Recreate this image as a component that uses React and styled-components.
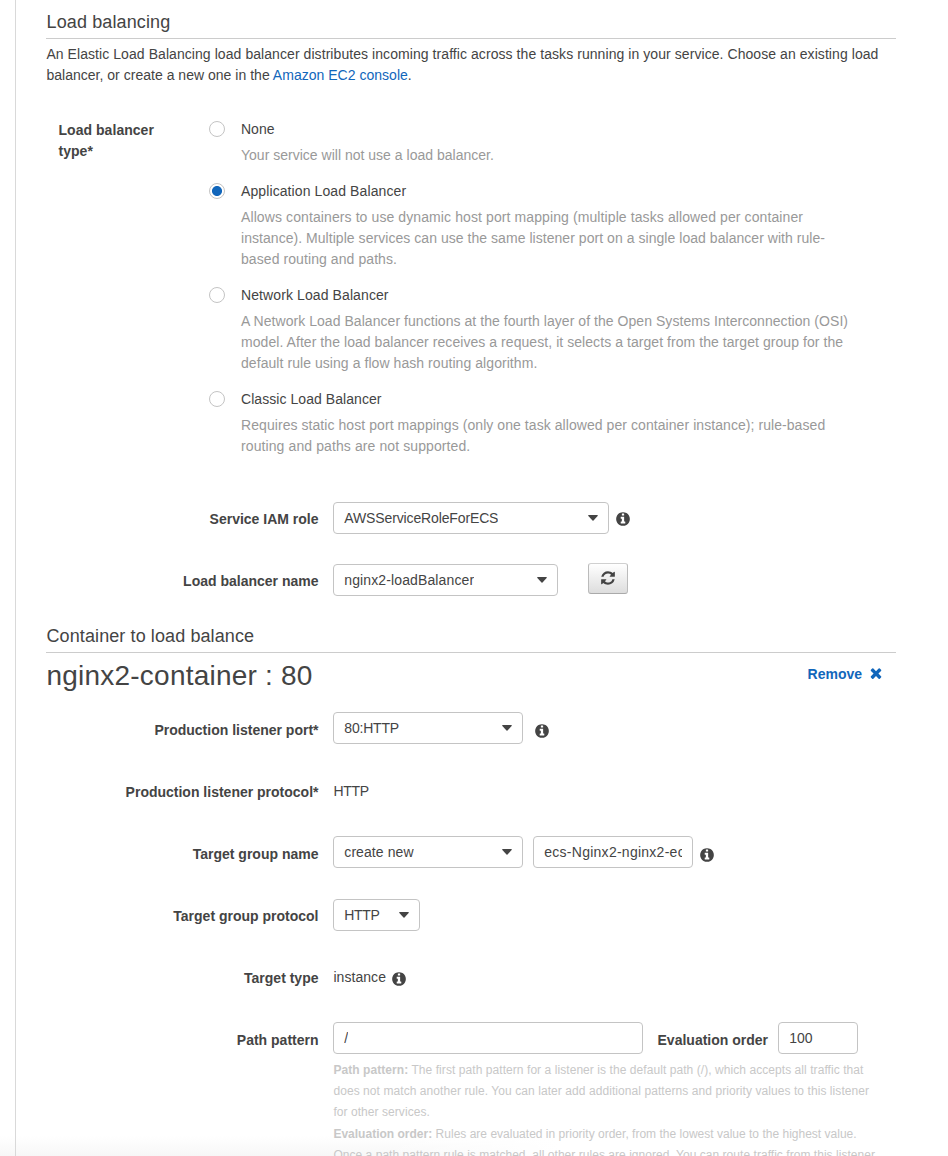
import React from "react";
import styled, { createGlobalStyle } from "styled-components";

const Global = createGlobalStyle`
  * { box-sizing: border-box; }
  html, body { margin: 0; padding: 0; background: #fff; overflow: hidden; }
  body {
    font-family: "Liberation Sans", Arial, sans-serif;
    font-size: 14px;
    line-height: 21px;
    color: #444;
  }
  h2, h3, p { margin: 0; font-weight: 400; }
`;

const Page = styled.div`
  height: 1156px;
  overflow: hidden;
  padding-left: 15px;
  background:
    linear-gradient(to right, rgba(255, 255, 255, 0) 380px, #fff 560px),
    linear-gradient(#fff 0, #fff 1136px, #f7f7f7 1156px);
`;
const Panel = styled.main`
  height: 1156px;
  border-left: 1px solid #d9d9d9;
  padding: 0 52px 0 30px;
`;
const SectionTitle = styled.h2`
  height: ${(p) => p.$height}px;
  display: flex;
  align-items: flex-end;
  padding: 0 0 5px 0.5px;
  border-bottom: 1px solid #ccc;
  font-size: 18px;
  line-height: 21px;
  letter-spacing: ${(p) => p.$ls || 0}px;
`;
const Line = styled.span`
  display: block;
  white-space: nowrap;
  letter-spacing: ${(p) => p.$ls || 0}px;
`;
const Intro = styled.p`
  padding: 5px 0 0 0.4px;
`;
const Link = styled.a`
  color: #1166bb;
`;
const TypeRow = styled.div`
  display: flex;
  margin-top: 33px;
  padding-left: 12px;
`;
const TypeLabel = styled.div`
  width: 151px;
  padding: 1px 0 0 0.5px;
  font-weight: 700;
  letter-spacing: 0.04px;
`;
const Options = styled.div`
  display: flex;
  flex-direction: column;
  gap: 15px;
`;
const Option = styled.label`
  display: grid;
  grid-template-columns: 16px auto;
  column-gap: 16px;
  row-gap: 5px;
`;
const Radio = styled.span`
  width: 16px;
  height: 16px;
  margin-top: 2px;
  border: 1px solid #c4c4c4;
  border-radius: 50%;
  background: ${(p) => (p.$on ? "radial-gradient(circle, #1166bb 4.6px, #fff 5.4px)" : "#fff")};
`;
const OptionName = styled.span`
  letter-spacing: ${(p) => p.$ls || 0}px;
`;
const OptionText = styled.span`
  grid-column: 2;
  color: #999;
`;
const Form = styled.div`
  display: flex;
  flex-direction: column;
  gap: 30px;
  margin-top: ${(p) => p.$top}px;
`;
const Row = styled.div`
  display: flex;
  height: 32px;
`;
const Label = styled.div`
  width: ${(p) => p.$width || 272.5}px;
  margin-right: ${(p) => p.$gap || 14.5}px;
  padding-top: ${(p) => p.$top || 7}px;
  font-weight: 700;
  text-align: right;
  white-space: nowrap;
`;
const Box = styled.div`
  width: ${(p) => p.$width}px;
  height: 32px;
  margin-left: ${(p) => p.$left || 0}px;
  margin-top: ${(p) => p.$drop || 0}px;
  padding: 0 10px;
  display: flex;
  align-items: center;
  justify-content: space-between;
  border: 1px solid #c4c4c4;
  border-radius: 4px;
  background: #fff;
`;
const BoxText = styled.span`
  padding-left: 0.3px;
  overflow: hidden;
  white-space: nowrap;
  letter-spacing: ${(p) => p.$ls || 0}px;
`;
const Value = styled.div`
  width: ${(p) => p.$width}px;
  padding: 7px 0 0 0.4px;
  letter-spacing: ${(p) => p.$ls || 0}px;
`;
const InfoSvg = styled.svg`
  width: 16px;
  height: 16px;
  margin: ${(p) => p.$top}px 0 0 ${(p) => p.$left}px;
  fill: #444;
`;
const RefreshButton = styled.button`
  width: 40px;
  height: 31px;
  margin: -1px 0 0 30px;
  padding: 0 0 2px;
  display: flex;
  align-items: center;
  justify-content: center;
  border: 1px solid #bbb;
  border-top-color: #d0d0d0;
  border-bottom-color: #aaa;
  border-radius: 3px;
  background: linear-gradient(#fff, #ddd);
  svg { width: 16px; height: 16px; fill: #444; }
`;
const ContainerHead = styled.div`
  display: flex;
  justify-content: space-between;
  height: 59px;
  padding: 6px 12px 0 0.5px;
`;
const ContainerTitle = styled.h3`
  font-size: 28px;
  line-height: 34px;
  letter-spacing: ${(p) => p.$ls || 0}px;
`;
const Remove = styled.a`
  display: flex;
  gap: 6px;
  height: 21px;
  margin-top: 5px;
  font-weight: 700;
  color: #1166bb;
  svg { width: 16px; height: 16px; margin-top: 1px; fill: #1166bb; }
`;
const Help = styled.div`
  display: flex;
  flex-direction: column;
  gap: 1px;
  margin: 6px 0 0 287.4px;
  font-size: 12px;
  color: #c8c8c8;
`;

const Caret = () => (
  <svg width="10" height="6" viewBox="0 0 10 6" fill="#444">
    <path d="M.7 0h8.600q.9.300.3 1L5.500 5.600q-.5.500-1 0L.4 1Q-.2.300.7 0z" />
  </svg>
);
const Info = ({ top, left }) => (
  <InfoSvg viewBox="0 0 1792 1792" $top={top} $left={left}>
    <path d="M1152 1376v-160q0-14-9-23t-23-9h-96v-512q0-14-9-23t-23-9h-320q-14 0-23 9t-9 23v160q0 14 9 23t23 9h96v320h-96q-14 0-23 9t-9 23v160q0 14 9 23t23 9h448q14 0 23-9t9-23zm-128-896v-160q0-14-9-23t-23-9h-192q-14 0-23 9t-9 23v160q0 14 9 23t23 9h192q14 0 23-9t9-23zm640 416q0 209-103 385.5t-279.5 279.5-385.5 103-385.5-103-279.5-279.5-103-385.5 103-385.5 279.5-279.5 385.5-103 385.5 103 279.5 279.5 103 385.5z" />
  </InfoSvg>
);
const Select = ({ children, width, drop, ls }) => (
  <Box $width={width} $drop={drop}>
    <BoxText $ls={ls}>{children}</BoxText>
    <Caret />
  </Box>
);

const options = [
  { name: "None", ls: 0, lines: [["Your service will not use a load balancer.", 0.01]] },
  {
    name: "Application Load Balancer",
    ls: 0.1,
    on: true,
    lines: [
      ["Allows containers to use dynamic host port mapping (multiple tasks allowed per container", 0.1],
      ["instance). Multiple services can use the same listener port on a single load balancer with rule-", 0.045],
      ["based routing and paths.", 0.08],
    ],
  },
  {
    name: "Network Load Balancer",
    ls: 0.1,
    lines: [
      ["A Network Load Balancer functions at the fourth layer of the Open Systems Interconnection (OSI)", 0.05],
      ["model. After the load balancer receives a request, it selects a target from the target group for the", 0.06],
      ["default rule using a flow hash routing algorithm.", 0.06],
    ],
  },
  {
    name: "Classic Load Balancer",
    ls: 0.06,
    lines: [
      ["Requires static host port mappings (only one task allowed per container instance); rule-based", 0.065],
      ["routing and paths are not supported.", 0.1],
    ],
  },
];

export default function App() {
  return (
    <Page>
      <Global />
      <Panel>
        <SectionTitle $height={39} $ls={0.12}>Load balancing</SectionTitle>
        <Intro>
          <Line $ls={0.067}>An Elastic Load Balancing load balancer distributes incoming traffic across the tasks running in your service. Choose an existing load</Line>
          <Line $ls={0.02}>balancer, or create a new one in the <Link>Amazon EC2 console</Link>.</Line>
        </Intro>
        <TypeRow>
          <TypeLabel>Load balancer<br />type*</TypeLabel>
          <Options>
            {options.map((o) => (
              <Option key={o.name}>
                <Radio $on={o.on} />
                <OptionName $ls={o.ls}>{o.name}</OptionName>
                <OptionText>
                  {o.lines.map(([text, ls]) => <Line key={text} $ls={ls}>{text}</Line>)}
                </OptionText>
              </Option>
            ))}
          </Options>
        </TypeRow>
        <Form $top={45}>
          <Row>
            <Label>Service IAM role</Label>
            <Select width={276} ls={-0.13}>AWSServiceRoleForECS</Select>
            <Info top={9} left={6} />
          </Row>
          <Row>
            <Label>Load balancer name</Label>
            <Select width={225} ls={0.12}>nginx2-loadBalancer</Select>
            <RefreshButton aria-label="Refresh">
              <svg viewBox="0 0 1792 1792">
                <path d="M1639 1056q0 5-1 7-64 268-268 434.500t-478 166.500q-146 0-282.500-55t-243.500-157l-129 129q-19 19-45 19t-45-19-19-45v-448q0-26 19-45t45-19h448q26 0 45 19t19 45-19 45l-137 137q71 66 161 102t187 36q134 0 250-65t186-179q11-17 53-117 8-23 30-23h192q13 0 22.500 9.500t9.500 22.500zm25-800v448q0 26-19 45t-45 19h-448q-26 0-45-19t-19-45 19-45l138-138q-148-137-349-137-134 0-250 65t-186 179q-11 17-53 117-8 23-30 23h-199q-13 0-22.500-9.500t-9.500-22.500v-7q65-268 270-434.500t480-166.500q146 0 284 55.500t245 156.500l130-129q19-19 45-19t45 19 19 45z" />
              </svg>
            </RefreshButton>
          </Row>
        </Form>
        <SectionTitle $height={57} $ls={0.1}>Container to load balance</SectionTitle>
        <ContainerHead>
          <ContainerTitle $ls={0.22}>nginx2-container : 80</ContainerTitle>
          <Remove>
            Remove
            <svg viewBox="0 0 1792 1792">
              <path d="M1490 1322q0 40-28 68l-136 136q-28 28-68 28t-68-28l-294-294-294 294q-28 28-68 28t-68-28l-136-136q-28-28-28-68t28-68l294-294-294-294q-28-28-28-68t28-68l136-136q28-28 68-28t68 28l294 294 294-294q28-28 68-28t68 28l136 136q28 28 28 68t-28 68l-294 294 294 294q28 28 28 68z" />
            </svg>
          </Remove>
        </ContainerHead>
        <Form $top={0}>
          <Row>
            <Label $top={8}>Production listener port*</Label>
            <Select width={190} ls={-0.2}>80:HTTP</Select>
            <Info top={11} left={11} />
          </Row>
          <Row>
            <Label $top={8}>Production listener protocol*</Label>
            <Value $ls={-0.3}>HTTP</Value>
          </Row>
          <Row>
            <Label $top={8}>Target group name</Label>
            <Select width={190} ls={0.08}>create new</Select>
            <Box $width={160} $left={10}>
              <BoxText $ls={0.26}>ecs-Nginx2-nginx2-ec</BoxText>
            </Box>
            <Info top={11} left={6} />
          </Row>
          <Row>
            <Label $top={8}>Target group protocol</Label>
            <Select width={87} drop={1} ls={-0.3}>HTTP</Select>
          </Row>
          <Row>
            <Label $top={8}>Target type</Label>
            <Value $width={53} $ls={0.06}>instance</Value>
            <Info top={11} left={5} />
          </Row>
          <Row>
            <Label $top={8}>Path pattern</Label>
            <Box $width={310}><BoxText>/</BoxText></Box>
            <Label $top={8} $width={125} $gap={10}>Evaluation order</Label>
            <Box $width={80}><BoxText>100</BoxText></Box>
          </Row>
        </Form>
        <Help>
          <p>
            <Line $ls={0.065}><b>Path pattern:</b> The first path pattern for a listener is the default path (/), which accepts all traffic that</Line>
            <Line $ls={0.072}>does not match another rule. You can later add additional patterns and priority values to this listener</Line>
            <Line $ls={0.06}>for other services.</Line>
          </p>
          <p>
            <Line $ls={0.01}><b>Evaluation order:</b> Rules are evaluated in priority order, from the lowest value to the highest value.</Line>
            <Line $ls={0.04}>Once a path pattern rule is matched, all other rules are ignored. You can route traffic from this listener</Line>
          </p>
        </Help>
      </Panel>
    </Page>
  );
}
